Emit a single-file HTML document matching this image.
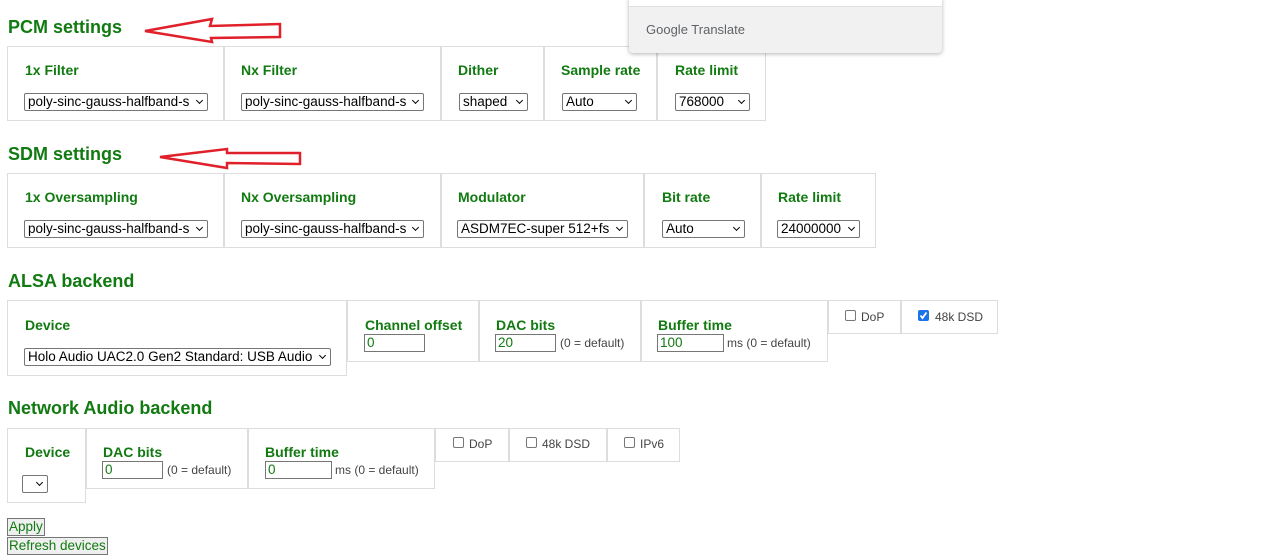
<!DOCTYPE html>
<html><head><meta charset="utf-8"><style>
body{margin:0;width:1280px;height:560px;background:#fff;font-family:"Liberation Sans",Arial,sans-serif;position:relative;overflow:hidden}
.a{position:absolute}
h2{position:absolute;margin:0;font-size:18px;font-weight:bold;color:#117a11;left:8px;line-height:20px}
.b{position:absolute;border:1px solid #ddd;box-sizing:border-box;margin-left:-1px}
.l{position:absolute;font-size:14px;font-weight:bold;color:#117a11;line-height:16px}
.s{position:absolute;height:18px;border:1px solid #767676;border-radius:2px;box-sizing:border-box;font-size:13.5px;line-height:16px;padding-left:3px;color:#000;background:#fff;white-space:nowrap;overflow:hidden}
.s::after{content:"";position:absolute;right:5px;top:4px;width:4px;height:4px;border-right:1.5px solid #000;border-bottom:1.5px solid #000;transform:rotate(45deg)}
.i{position:absolute;height:18px;border:1px solid #767676;box-sizing:border-box;font-size:13.5px;line-height:16px;padding-left:2px;color:#117a11;background:#fff}
.t{position:absolute;font-size:12px;color:#444;line-height:14px}
.c{position:absolute;width:11px;height:11px;border:1px solid #777;border-radius:2px;box-sizing:border-box;background:#fff}
.cc{background:#1a73e8;border-color:#1a73e8}
.btn{position:absolute;border:1px solid #767676;background:#efefef;color:#117a11;font-size:13.5px;line-height:16px;padding:0 1px;box-sizing:border-box;height:18px;white-space:nowrap}
</style></head><body>

<h2 style="top:17px">PCM settings</h2>
<svg class="a" style="left:140px;top:14px" width="145" height="32"><polygon points="5,17 72,5 70,12 140,10 140,23 71,24 72,28" fill="none" stroke="#e0202a" stroke-width="2.5"/></svg>
<div class="b" style="left:8px;top:46px;width:217px;height:75px"></div>
<div class="b" style="left:225px;top:46px;width:217px;height:75px"></div>
<div class="b" style="left:442px;top:46px;width:103px;height:75px"></div>
<div class="b" style="left:545px;top:46px;width:113px;height:75px"></div>
<div class="b" style="left:658px;top:46px;width:109px;height:75px"></div>
<div class="l" style="left:25px;top:62px">1x Filter</div>
<div class="l" style="left:241px;top:62px">Nx Filter</div>
<div class="l" style="left:458px;top:62px">Dither</div>
<div class="l" style="left:561px;top:62px">Sample rate</div>
<div class="l" style="left:675px;top:62px">Rate limit</div>
<div class="s" style="left:24px;top:93px;width:184px">poly-sinc-gauss-halfband-s</div>
<div class="s" style="left:241px;top:93px;width:183px">poly-sinc-gauss-halfband-s</div>
<div class="s" style="left:459px;top:93px;width:69px">shaped</div>
<div class="s" style="left:562px;top:93px;width:75px">Auto</div>
<div class="s" style="left:675px;top:93px;width:75px">768000</div>

<h2 style="top:144px">SDM settings</h2>
<svg class="a" style="left:155px;top:143px" width="150" height="30"><polygon points="5,14 72,6 72,10 145,10 145,21 72,20 72,25" fill="none" stroke="#e0202a" stroke-width="2.5"/></svg>
<div class="b" style="left:8px;top:173px;width:217px;height:75px"></div>
<div class="b" style="left:225px;top:173px;width:217px;height:75px"></div>
<div class="b" style="left:442px;top:173px;width:203px;height:75px"></div>
<div class="b" style="left:645px;top:173px;width:117px;height:75px"></div>
<div class="b" style="left:762px;top:173px;width:115px;height:75px"></div>
<div class="l" style="left:25px;top:189px">1x Oversampling</div>
<div class="l" style="left:241px;top:189px">Nx Oversampling</div>
<div class="l" style="left:458px;top:189px">Modulator</div>
<div class="l" style="left:662px;top:189px">Bit rate</div>
<div class="l" style="left:778px;top:189px">Rate limit</div>
<div class="s" style="left:24px;top:220px;width:184px">poly-sinc-gauss-halfband-s</div>
<div class="s" style="left:241px;top:220px;width:183px">poly-sinc-gauss-halfband-s</div>
<div class="s" style="left:457px;top:220px;width:171px">ASDM7EC-super 512+fs</div>
<div class="s" style="left:662px;top:220px;width:83px">Auto</div>
<div class="s" style="left:777px;top:220px;width:83px">24000000</div>

<h2 style="top:271px">ALSA backend</h2>
<div class="b" style="left:8px;top:300px;width:340px;height:76px"></div>
<div class="b" style="left:348px;top:300px;width:132px;height:62px"></div>
<div class="b" style="left:480px;top:300px;width:162px;height:62px"></div>
<div class="b" style="left:642px;top:300px;width:187px;height:62px"></div>
<div class="b" style="left:829px;top:300px;width:73px;height:34px"></div>
<div class="b" style="left:902px;top:300px;width:97px;height:34px"></div>
<div class="l" style="left:25px;top:317px">Device</div>
<div class="s" style="left:24px;top:348px;width:307px">Holo Audio UAC2.0 Gen2 Standard: USB Audio</div>
<div class="l" style="left:365px;top:317px">Channel offset</div>
<div class="i" style="left:364px;top:334px;width:61px">0</div>
<div class="l" style="left:496px;top:317px">DAC bits</div>
<div class="i" style="left:495px;top:334px;width:61px">20</div>
<div class="t" style="left:560px;top:336px">(0 = default)</div>
<div class="l" style="left:658px;top:317px">Buffer time</div>
<div class="i" style="left:657px;top:334px;width:67px">100</div>
<div class="t" style="left:727px;top:336px">ms (0 = default)</div>
<div class="c" style="left:845px;top:310px"></div><div class="t" style="left:861px;top:310px">DoP</div>
<div class="c cc" style="left:918px;top:310px"><svg width="11" height="11" style="position:absolute;left:-1px;top:-1px"><path d="M2.5 5.5 L4.5 8 L8.5 2.5" stroke="#fff" stroke-width="1.8" fill="none"/></svg></div><div class="t" style="left:935px;top:310px">48k DSD</div>

<h2 style="top:398px">Network Audio backend</h2>
<div class="b" style="left:8px;top:428px;width:79px;height:75px"></div>
<div class="b" style="left:87px;top:428px;width:162px;height:61px"></div>
<div class="b" style="left:249px;top:428px;width:187px;height:61px"></div>
<div class="b" style="left:436px;top:428px;width:74px;height:34px"></div>
<div class="b" style="left:510px;top:428px;width:98px;height:34px"></div>
<div class="b" style="left:608px;top:428px;width:73px;height:34px"></div>
<div class="l" style="left:25px;top:444px">Device</div>
<div class="s" style="left:22px;top:475px;width:26px"></div>
<div class="l" style="left:103px;top:444px">DAC bits</div>
<div class="i" style="left:102px;top:461px;width:61px">0</div>
<div class="t" style="left:167px;top:463px">(0 = default)</div>
<div class="l" style="left:265px;top:444px">Buffer time</div>
<div class="i" style="left:265px;top:461px;width:67px">0</div>
<div class="t" style="left:335px;top:463px">ms (0 = default)</div>
<div class="c" style="left:453px;top:437px"></div><div class="t" style="left:469px;top:437px">DoP</div>
<div class="c" style="left:526px;top:437px"></div><div class="t" style="left:542px;top:437px">48k DSD</div>
<div class="c" style="left:624px;top:437px"></div><div class="t" style="left:640px;top:437px">IPv6</div>

<div class="btn" style="left:7px;top:518px">Apply</div>
<div class="btn" style="left:7px;top:537px">Refresh devices</div>

<div class="a" style="left:629px;top:-2px;width:313px;height:55px;background:#f1f1f1;border-radius:0 0 4px 4px;box-shadow:0 1px 4px rgba(0,0,0,.3)">
<div class="a" style="left:0;top:0;width:313px;height:8px;background:#fff;border-bottom:1px solid #e0e0e0"></div>
<div class="a" style="left:17px;top:24px;font-size:13px;color:#5f6368">Google Translate</div>
</div>
</body></html>
